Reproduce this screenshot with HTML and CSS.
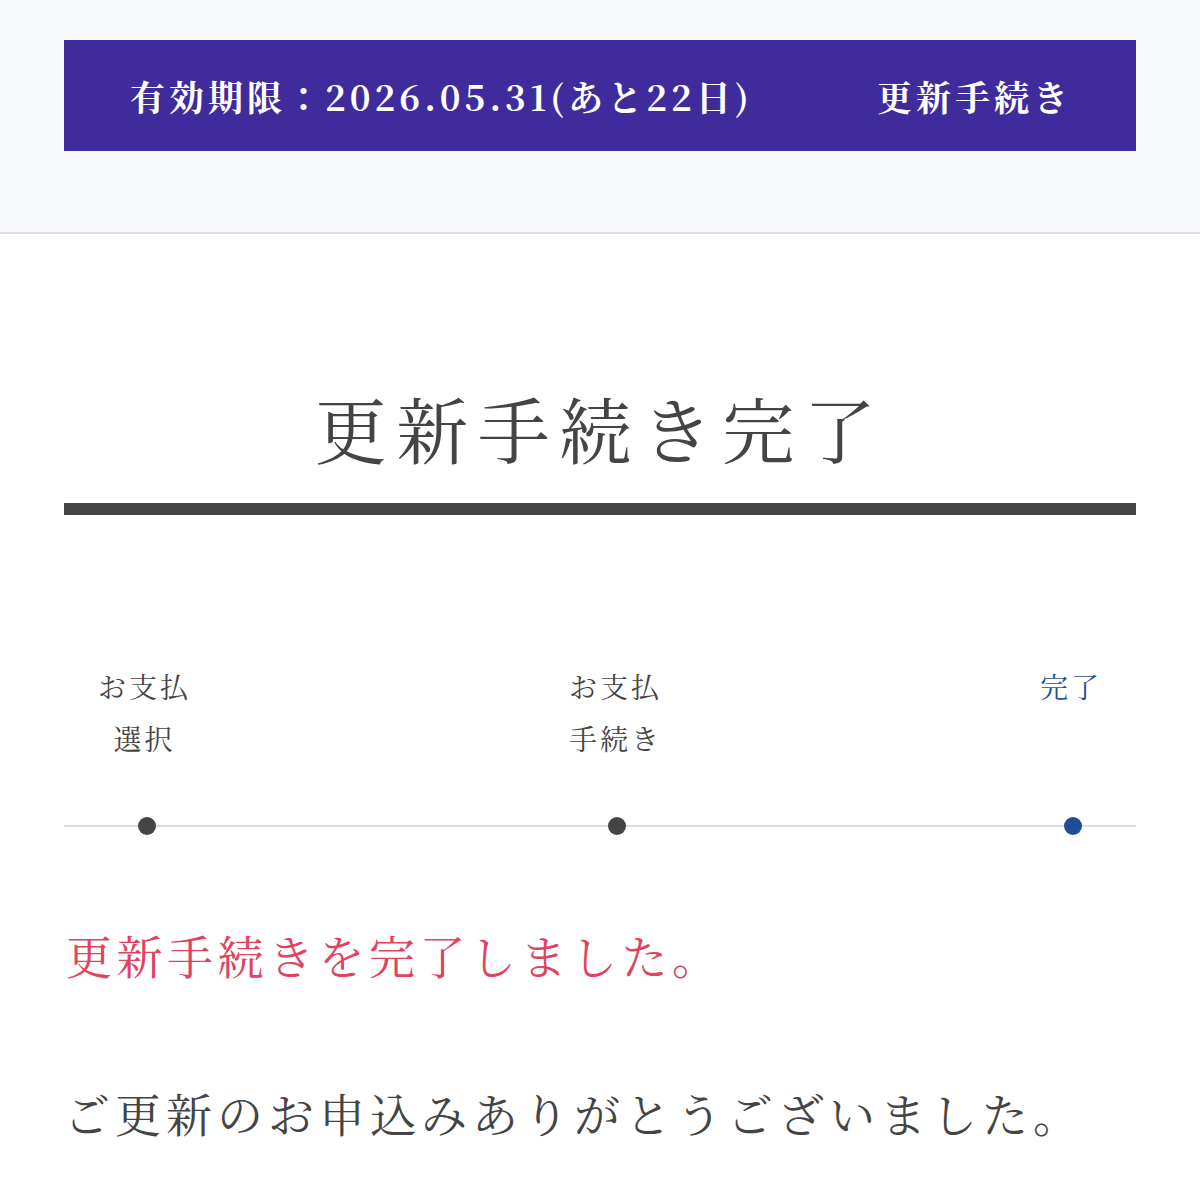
FILE: index.html
```html
<!DOCTYPE html>
<html lang="ja">
<head>
<meta charset="utf-8">
<title>更新手続き完了</title>
<link rel="stylesheet" href="styles.css">
</head>
<body>
<header class="top">
  <div class="banner">
    <span class="expiry">有効期限：2026.05.31(あと22日)</span>
    <a class="renew" href="#">更新手続き</a>
  </div>
</header>
<main class="main">
  <h1 class="title">更新手続き完了</h1>
  <div class="title-bar"></div>
  <div class="steps">
    <div class="step">
      <div class="label">お支払<br>選択</div>
      <span class="dot"></span>
    </div>
    <div class="step">
      <div class="label">お支払<br>手続き</div>
      <span class="dot"></span>
    </div>
    <div class="step current">
      <div class="label">完了</div>
      <span class="dot"></span>
    </div>
  </div>
  <p class="done">更新手続きを完了しました。</p>
  <p class="thanks">ご更新のお申込みありがとうございました。</p>
</main>
</body>
</html>
```

FILE: styles.css
```css
html, body {
  margin: 0;
  padding: 0;
  background: #ffffff;
}
body {
  font-family: "Noto Serif CJK JP", "Liberation Serif", "Noto Sans CJK JP", serif;
  color: #444444;
}
.top {
  background: #f8f9fc;
  padding: 40px 64px 81px;
  border-bottom: 2px solid #dcdce0;
}
.banner {
  height: 111px;
  background: #3f2b9b;
  display: flex;
  align-items: center;
  justify-content: space-between;
  padding: 0 64px 0 66px;
  color: #ffffff;
  font-size: 35px;
  font-weight: bold;
  letter-spacing: 4px;
}
.renew {
  color: #ffffff;
  text-decoration: none;
}
.main {
  padding: 0 64px 40px;
}
.title {
  margin: 150px 0 0;
  padding-bottom: 3px;
  font-size: 72px;
  line-height: 86px;
  font-weight: normal;
  text-align: center;
  letter-spacing: 9.5px;
  color: #444444;
}
.title-bar {
  margin-top: 30px;
  height: 12px;
  background: #444444;
}
.steps {
  margin-top: 145px;
  display: flex;
  justify-content: space-between;
  padding: 0 34px;
  background-image: linear-gradient(#dddddd, #dddddd);
  background-repeat: no-repeat;
  background-size: 100% 2px;
  background-position: 0 calc(100% - 8px);
}
.step {
  display: flex;
  flex-direction: column;
  align-items: center;
  justify-content: space-between;
}
.label {
  font-size: 28px;
  line-height: 52px;
  letter-spacing: 3px;
  text-align: center;
  color: #444444;
}
.dot {
  display: block;
  width: 18px;
  height: 18px;
  border-radius: 50%;
  background: #444444;
  margin-top: 53px;
  margin-left: 4px;
}
.current .label {
  color: #1f4e96;
}
.current .dot {
  background: #1f4e96;
}
.done {
  margin: 86px 0 0;
  padding-left: 2px;
  font-size: 46px;
  line-height: 66px;
  letter-spacing: 4.5px;
  color: #e0435e;
}
.thanks {
  margin: 92px 0 0;
  font-size: 46px;
  line-height: 66px;
  letter-spacing: 5px;
  color: #444444;
}
```
